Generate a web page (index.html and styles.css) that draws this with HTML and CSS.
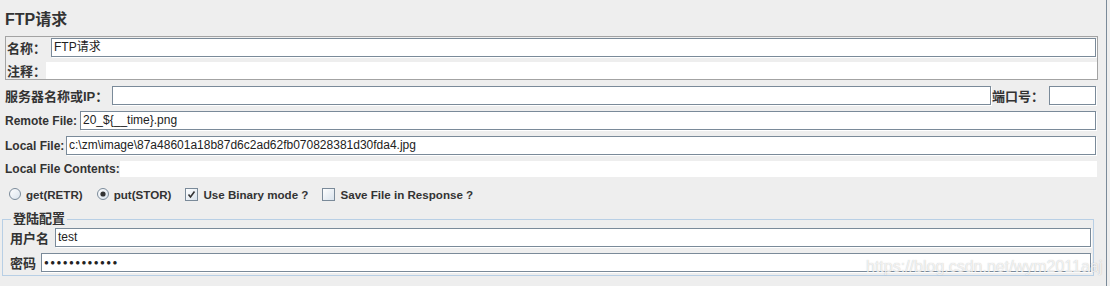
FILE: index.html
```html
<!DOCTYPE html>
<html lang="zh-CN">
<head>
  <meta charset="UTF-8">
  <title>FTP请求</title>
  <link rel="stylesheet" href="styles.css">
</head>
<body>
  <div class="page">
    <div class="main">
      <!-- Title -->
      <h1 class="title">FTP请求</h1>

      <!-- Name / comment panel -->
      <div class="name-panel">
        <div class="row row-name">
          <span class="lbl cn lbl-name">名称：</span>
          <span class="field">FTP请求</span>
        </div>
        <div class="row row-comment">
          <span class="lbl cn lbl-comment">注释：</span>
          <span class="field plain"></span>
        </div>
      </div>

      <!-- Server settings -->
      <div class="row">
        <span class="lbl cn lbl-server">服务器名称或IP：</span>
        <span class="field"></span>
        <span class="lbl cn lbl-port">端口号：</span>
        <span class="field port"></span>
      </div>
      <div class="row">
        <span class="lbl lbl-remote">Remote File:</span>
        <span class="field">20_${__time}.png</span>
      </div>
      <div class="row">
        <span class="lbl lbl-local">Local File:</span>
        <span class="field">c:\zm\image\87a48601a18b87d6c2ad62fb070828381d30fda4.jpg</span>
      </div>
      <div class="row row-contents">
        <span class="lbl lbl-contents">Local File Contents:</span>
        <span class="field plain"></span>
      </div>

      <!-- Mode options -->
      <div class="options">
        <span class="opt">
          <svg class="radio" width="12" height="12" viewBox="0 0 12 12">
            <defs>
              <linearGradient id="g" x1="0" y1="0" x2="1" y2="1">
                <stop offset="0" stop-color="#ffffff"/>
                <stop offset="1" stop-color="#d8e2ec"/>
              </linearGradient>
            </defs>
            <circle cx="6" cy="6" r="5.5" fill="url(#g)" stroke="#7a8a99"/>
          </svg>get(RETR)
        </span>
        <span class="opt">
          <svg class="radio" width="12" height="12" viewBox="0 0 12 12">
            <circle cx="6" cy="6" r="5.5" fill="url(#g)" stroke="#7a8a99"/>
            <circle cx="6" cy="6" r="2.6" fill="#333"/>
          </svg>put(STOR)
        </span>
        <span class="opt">
          <svg class="check" width="13" height="13" viewBox="0 0 13 13">
            <rect x="0.5" y="0.5" width="12" height="12" fill="url(#g)" stroke="#7a8a99"/>
            <path d="M3.5 6.5 L5.5 9 L9.5 3.5" fill="none" stroke="#333" stroke-width="1.6"/>
          </svg>Use Binary mode ?
        </span>
        <span class="opt">
          <svg class="check" width="13" height="13" viewBox="0 0 13 13">
            <rect x="0.5" y="0.5" width="12" height="12" fill="url(#g)" stroke="#7a8a99"/>
          </svg>Save File in Response ?
        </span>
      </div>

      <!-- Login settings -->
      <fieldset class="login">
        <legend class="cn">登陆配置</legend>
        <div class="row">
          <span class="lbl cn lbl-user">用户名</span>
          <span class="field">test</span>
        </div>
        <div class="row">
          <span class="lbl cn lbl-pass">密码</span>
          <span class="field dots">●●●●●●●●●●●●</span>
        </div>
      </fieldset>

      <div class="watermark">https://blog.csdn.net/wym2011aaj</div>
    </div>
  </div>
</body>
</html>
```

FILE: styles.css
```css
body {
  margin: 0;
  background: #eeeeee;
  font-family: "Liberation Sans", "Noto Sans CJK SC", sans-serif;
  font-size: 12px;
  color: #333333;
}
.page {
  display: flex;
  height: 286px;
  overflow: hidden;
}
.main {
  position: relative;
  width: 1106px;
  border-right: 1px solid #7a8a99;
}
.title {
  margin: 0 0 6px 5px;
  padding-top: 10px;
  font-size: 16px;
  line-height: 20px;
  font-weight: bold;
}
.name-panel {
  margin-left: 5px;
  width: 1090px;
  border: 1px solid #a3a3a3;
  padding: 1px 0 0 1px;
}
.row {
  display: flex;
  align-items: center;
  height: 19px;
  margin: 6px 10px 0 0;
}
.name-panel .row {
  margin: 0 1px 0 0;
}
.row-name {
  height: 19px;
}
.name-panel .row-comment {
  height: 17px;
  margin: 5px 0 0 0;
}
.lbl {
  flex: none;
  font-weight: bold;
  white-space: nowrap;
  padding-left: 5px;
  box-sizing: border-box;
}
.cn {
  font-size: 13px;
}
.lbl-name { width: 44px; padding-left: 0; }
.lbl-comment { width: 39px; padding-left: 0; }
.lbl-server { width: 112px; }
.lbl-port { width: 58px; padding-left: 1px; }
.lbl-remote { width: 80px; }
.lbl-local { width: 66px; }
.lbl-contents { width: 120px; }
.field {
  flex: 1;
  height: 100%;
  box-sizing: border-box;
  background: #ffffff;
  border: 1px solid #7a8a99;
  box-shadow: 1px 1px 0 #ffffff;
  padding-left: 2px;
  line-height: 17px;
  font-size: 12px;
  font-weight: normal;
  color: #222222;
  white-space: nowrap;
  overflow: hidden;
}
.field.plain {
  border: none;
  box-shadow: none;
}
.field.port {
  flex: none;
  width: 47px;
}
.row-contents {
  height: 16px;
  margin-right: 9px;
}
.options {
  display: flex;
  align-items: center;
  height: 18px;
  margin: 8px 0 0 9px;
  font-weight: bold;
  font-size: 11.6px;
}
.opt {
  display: flex;
  align-items: center;
  margin-right: 14px;
}
.opt svg {
  margin-right: 5px;
}
.login {
  margin: 9px 0 0 2px;
  width: 1092px;
  box-sizing: border-box;
  border: 1px solid #b8cfe5;
  padding: 2px 2px 3px 6px;
}
.login legend {
  margin-left: 2px;
  padding: 0 2px;
  font-weight: bold;
  line-height: 14px;
}
.login .row {
  margin: 0 0 6px 0;
}
.login .row:last-child {
  margin-bottom: 0;
}
.lbl-user { width: 46px; padding-left: 1px; }
.lbl-pass { width: 32px; padding-left: 1px; }
.field.dots {
  font-size: 8px;
  letter-spacing: 1.4px;
}
.watermark {
  position: absolute;
  left: 866px;
  top: 258px;
  font-size: 16px;
  line-height: 18px;
  color: rgba(255, 255, 255, 0.75);
  text-shadow: 0 0 1px rgba(110, 110, 110, 0.45);
  white-space: nowrap;
}
```
